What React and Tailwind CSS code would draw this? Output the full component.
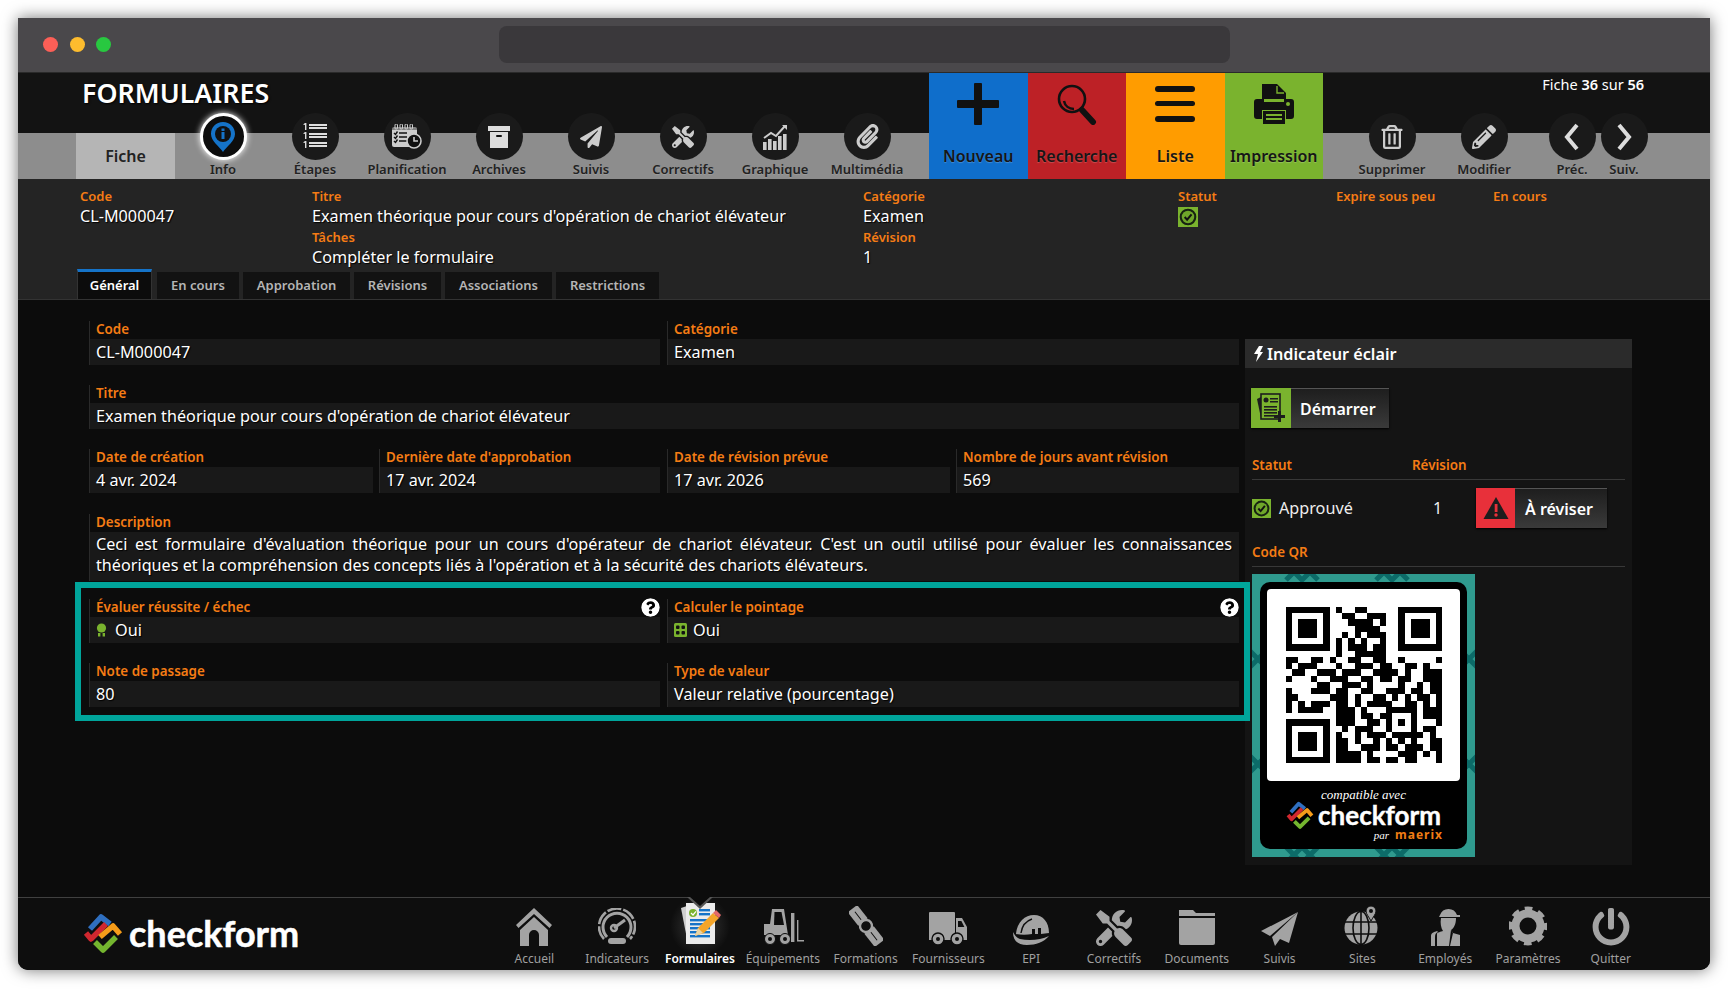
import React from "react";
import { FaTools, FaPaperPlane, FaPencilAlt, FaRegTrashAlt, FaPaperclip, FaQuestionCircle, FaPowerOff } from "react-icons/fa";

const G = "#a3a3a3";

const Pin = () => (
  <svg width="28" height="32" viewBox="0 0 28 32">
    <path d="M14 1C7 1 2 6 2 13c0 7 8 12 12 18 4-6 12-11 12-18C26 6 21 1 14 1z" fill="#1573c8" />
    <circle cx="14" cy="13" r="8" fill="#111" />
    <rect x="12.5" y="11" width="3" height="7" fill="#1573c8" />
    <rect x="12.5" y="7.5" width="3" height="2.5" fill="#1573c8" />
  </svg>
);
const Steps = () => (
  <svg width="26" height="27" viewBox="0 0 26 27" fill="#ddd" className="overflow-visible">
    {[0, 9, 18].map((y) => <path key={y} d={`M1 ${y + 1.5}l2-1.5h1.4v7H3v-5z`} />)}
    {[1, 4, 10, 13, 19, 22].map((y) => <rect key={y} x="7" y={y} width="18" height="2" />)}
  </svg>
);
const Plan = () => (
  <svg width="30" height="26" viewBox="0 0 30 26">
    <rect x="0" y="3" width="25" height="20" rx="2" fill="#ccc" />
    <rect x="0" y="3" width="25" height="3" fill="#111" opacity=".4" />
    {[3, 8, 13, 18].map((x) => <rect key={x} x={x} y="0" width="2.5" height="5" rx="1" fill="none" stroke="#ccc" />)}
    {[9, 13, 17].map((y) => <path key={y} d={`M2 ${y}l1.5 1.5 2-3M7 ${y}h8`} stroke="#111" strokeWidth="1.4" fill="none" />)}
    <circle cx="22" cy="17" r="7" fill="#111" stroke="#ccc" strokeWidth="1.6" />
    <path d="M22 13v4h4" stroke="#ccc" strokeWidth="1.6" fill="none" />
  </svg>
);
const Archive = () => (
  <svg width="24" height="24" viewBox="0 0 24 24" fill="#ddd">
    <rect x="1" y="1" width="22" height="5" />
    <rect x="3" y="7" width="18" height="16" />
    <rect x="9" y="10" width="6" height="2" rx="1" fill="#111" />
  </svg>
);
const Chart = () => (
  <svg width="26" height="28" viewBox="0 0 26 28" fill="#ccc">
    <path d="M2 15l7-5 5 3L23 3" stroke="#ccc" strokeWidth="2" fill="none" />
    <path d="M20 2h5v5z" />
    {[[1, 19], [6, 16], [11, 18], [16, 13], [21, 11]].map(([x, y]) => <rect key={x} x={x} y={y} width="3.6" height={27 - y} />)}
  </svg>
);
const Chev = ({ left }) => (
  <svg width="20" height="30" viewBox="0 0 20 30">
    <path d={left ? "M15 3L5 15l10 12" : "M5 3l10 12L5 27"} stroke="#ddd" strokeWidth="4" fill="none" />
  </svg>
);
const Plus = () => (
  <svg width="42" height="42" viewBox="0 0 42 42" fill="#111">
    <rect x="17" y="0" width="8" height="42" rx="1" />
    <rect x="0" y="17" width="42" height="8" rx="1" />
  </svg>
);
const Loupe = () => (
  <svg width="42" height="42" viewBox="0 0 42 42" fill="none" stroke="#111">
    <circle cx="16" cy="16" r="13" strokeWidth="2.6" />
    <path d="M8 18c1 5 5 8 10 8" strokeWidth="2.5" />
    <path d="M26 27l11 12" strokeWidth="6" strokeLinecap="round" />
  </svg>
);
const Burger = () => (
  <svg width="42" height="36" viewBox="0 0 42 36" fill="#111">
    <rect x="1" y="0" width="40" height="6" rx="3" />
    <rect x="1" y="15" width="40" height="5" rx="2.5" />
    <rect x="1" y="30" width="40" height="6" rx="3" />
  </svg>
);
const Printer = () => (
  <svg width="40" height="40" viewBox="0 0 40 40" fill="#111">
    <path d="M8 0h15l9 9v8H8z" />
    <path d="M23 2v7h7" fill="none" stroke="#7ab32e" strokeWidth="1.4" />
    <path d="M3 15h34a3 3 0 0 1 3 3v14a3 3 0 0 1-3 3h-5V26H8v9H3a3 3 0 0 1-3-3V18a3 3 0 0 1 3-3z" />
    <rect x="10" y="15" width="20" height="3" fill="#7ab32e" />
    <circle cx="34" cy="20" r="2" fill="#7ab32e" />
    <rect x="9" y="27" width="22" height="13" />
    <rect x="12" y="30" width="16" height="2" fill="#7ab32e" />
    <rect x="12" y="34" width="16" height="2" fill="#7ab32e" />
  </svg>
);

const Status = ({ size = 18 }) => (
  <svg width={size} height={size} viewBox="0 0 18 18">
    <rect width="18" height="18" fill="#7ab32e" />
    <circle cx="9" cy="9" r="7.5" fill="#172212" />
    <circle cx="9" cy="9" r="5.6" fill="#6fa62a" />
    <path d="M6 9l2.2 2.4L12.2 6.6" stroke="#111" strokeWidth="1.8" fill="none" />
  </svg>
);
const Ribbon = () => (
  <svg width="11" height="14" viewBox="0 0 11 14" fill="#7ab32e">
    <circle cx="5.5" cy="5" r="4.6" />
    <rect x="2" y="10" width="2.4" height="3.5" />
    <rect x="6.6" y="10" width="2.4" height="3.5" />
  </svg>
);
const Calc = () => (
  <svg width="13" height="14" viewBox="0 0 13 14">
    <rect width="13" height="14" rx="1.5" fill="#7ab32e" />
    <rect x="2" y="2.5" width="3.5" height="3.5" rx="1" fill="#111" />
    <rect x="7.5" y="2.5" width="3.5" height="3.5" rx="1" fill="#111" />
    <rect x="2" y="8" width="3.5" height="3.5" rx="1" fill="#111" />
    <rect x="7.5" y="8" width="3.5" height="3.5" rx="1" fill="#111" />
  </svg>
);
const DocPlus = () => (
  <svg width="30" height="30" viewBox="0 0 30 30">
    <path d="M5 4L1 6l4 19 3-1z" fill="#1d1d1d" />
    <rect x="5" y="1" width="19" height="25" fill="#7ab32e" stroke="#1d1d1d" strokeWidth="1.6" />
    <circle cx="10" cy="7" r="2.5" fill="#1d1d1d" />
    {[6, 9].map((y) => <rect key={y} x="14" y={y - 1} width="8" height="1.5" fill="#1d1d1d" />)}
    {[13, 16, 19, 22].map((y) => <rect key={y} x="8" y={y} width="13" height="1.6" fill="#1d1d1d" />)}
    <path d="M22 18h3v4h4v3h-4v4h-3v-4h-4v-3h4z" fill="#1d1d1d" />
  </svg>
);
const Warn = () => (
  <svg width="26" height="24" viewBox="0 0 26 24">
    <path d="M13 1l12.5 22H.5z" fill="#1d1d1d" />
    <rect x="11.7" y="8" width="2.8" height="8" fill="#e8303a" />
    <circle cx="13" cy="19" r="1.7" fill="#e8303a" />
  </svg>
);
const Bolt = () => (
  <svg width="9" height="16" viewBox="0 0 9 16" fill="#fff">
    <path d="M5 0h4L6 6h3L2 16l2-8H0z" />
  </svg>
);

const Home = () => (
  <svg width="36" height="38" viewBox="0 0 36 38" fill={G}>
    <path d="M18 0l18 17-2.5 3L18 6 2.5 20 0 17z" />
    <path d="M18 9l14 13v16H23V27a5 5 0 0 0-10 0v11H4V22z" />
  </svg>
);
const Gauge = () => (
  <svg width="38" height="38" viewBox="0 0 38 38" fill="none" stroke={G}>
    <path d="M9 29a14 14 0 1 1 20 0" strokeWidth="3" />
    <path d="M6 31A18 18 0 1 1 32 31" strokeWidth="2.6" strokeDasharray="14 2" />
    <path d="M16 20l11-8" strokeWidth="3" />
    <circle cx="16" cy="20" r="3" strokeWidth="2.4" />
    <rect x="10" y="30" width="18" height="6" rx="3" fill={G} stroke="none" />
  </svg>
);
const FormIcon = () => (
  <svg width="46" height="44" viewBox="0 0 46 44">
    <path d="M4 6l6-2 3 38h-2z" fill="#cfcfcf" />
    <rect x="9" y="1" width="29" height="41" fill="#ececec" />
    <circle cx="16" cy="11" r="4" fill="#7ab32e" />
    <path d="M14 11l2 2 3-3.6" stroke="#fff" strokeWidth="1.2" fill="none" />
    {[7, 11].map((y) => <rect key={y} x="22" y={y} width="11" height="2.4" fill="#1573c8" />)}
    {[17, 21, 25, 29, 33].map((y) => <rect key={y} x="13" y={y} width="20" height="2.4" fill="#1573c8" />)}
    <path d="M18 34l3-8 15-15 6 5-15 15z" fill="#f4a52a" />
    <path d="M36 11l3-3 5 5-2 3z" fill="#e46a6a" />
    <path d="M18 34l3-8 5 5z" fill="#e9d4a5" />
  </svg>
);
const Forklift = () => (
  <svg width="42" height="38" viewBox="0 0 42 38" fill={G}>
    <path d="M10 1h12l4 26H2V16h6z" />
    <path d="M12.5 4h7l2.5 13h-10z" fill="#0e0e0e" />
    <circle cx="8" cy="31" r="5.5" stroke="#0e0e0e" strokeWidth="1" />
    <circle cx="8" cy="31" r="2" fill="#0e0e0e" />
    <circle cx="23" cy="31" r="5.5" stroke="#0e0e0e" strokeWidth="1" />
    <circle cx="23" cy="31" r="2" fill="#0e0e0e" />
    <rect x="29" y="5" width="3.4" height="29" />
    <path d="M35 12h1.4v20H42v1.6h-7z" />
  </svg>
);
const Scroll = () => (
  <svg width="34" height="40" viewBox="0 0 34 40" fill={G}>
    <g transform="rotate(-38 17 20)">
      <rect x="11" y="-2" width="12" height="17" />
      <rect x="11" y="25" width="12" height="17" />
      <circle cx="17" cy="20" r="6" fill="none" stroke={G} strokeWidth="2.4" />
      <path d="M17 2v10M17 28v10" stroke="#0e0e0e" />
    </g>
  </svg>
);
const Truck = () => (
  <svg width="38" height="34" viewBox="0 0 38 34" fill={G}>
    <rect x="0" y="0" width="26" height="26" rx="1" />
    <path d="M27 6h6l5 9v11H27z" />
    <path d="M29 9h3.4l3 6H29z" fill="#0e0e0e" />
    <rect x="0" y="25" width="38" height="3" />
    <circle cx="9" cy="27" r="6" stroke="#0e0e0e" strokeWidth="1.4" />
    <circle cx="9" cy="27" r="2" fill="#0e0e0e" />
    <circle cx="28" cy="27" r="6" stroke="#0e0e0e" strokeWidth="1.4" />
    <circle cx="28" cy="27" r="2" fill="#0e0e0e" />
  </svg>
);
const Hat = () => (
  <svg width="38" height="32" viewBox="0 0 38 32" fill={G}>
    <path d="M4 20C5 8 13 1 22 1c9 0 15 7 15 18l-8 1v-6h-3v6h-3v-5h-3v5c-5 1-11 1-16 0z" />
    <path d="M1 18c0 8 4 13 14 13 9 0 17-3 22-9-8 4-20 5-29 3-3-1-5-3-7-7z" />
    <path d="M9 19C10 12 14 7 20 5" stroke="#0e0e0e" strokeWidth="1.4" fill="none" />
  </svg>
);
const Folder = () => (
  <svg width="38" height="36" viewBox="0 0 38 36" fill={G}>
    <path d="M1 0h14l3 3h19v3H1z" />
    <path d="M1 8h36v25a2 2 0 0 1-2 2H3a2 2 0 0 1-2-2z" />
  </svg>
);
const Plane = () => (
  <svg width="38" height="34" viewBox="0 0 38 34" fill={G}>
    <path d="M37 0L0 19l9 5z" />
    <path d="M37 0L11 25l3 9 5-7 9 4z" />
  </svg>
);
const Globe = () => (
  <svg width="36" height="40" viewBox="0 0 36 40" fill={G}>
    <circle cx="17" cy="22" r="16.5" />
    <g stroke="#0e0e0e" strokeWidth="1.6" fill="none">
      <path d="M1 16h32M1 28h32M17 5v34" />
      <ellipse cx="17" cy="22" rx="8" ry="16.5" />
    </g>
    <path d="M27 0a5 5 0 0 1 5 5c0 3-3 6-5 10-2-4-5-7-5-10a5 5 0 0 1 5-5z" stroke="#0e0e0e" />
    <circle cx="27" cy="5" r="2" fill="#0e0e0e" />
  </svg>
);
const Worker = () => (
  <svg width="32" height="40" viewBox="0 0 32 40" fill={G}>
    <path d="M11 9a9 9 0 0 1 17 0h3v2H10z" />
    <path d="M12 12h15c0 6-2 10-5 12l2 3 7 2v11H8V28c0-2 4-2 6-3-2-3-3-8-2-13z" />
    <path d="M2 40V30c0-3 3-4 6-5l1 1c-2 1-3 2-3 5v9z" />
    <path d="M22 24l2 3-3 13h-1z" fill="#0e0e0e" />
  </svg>
);
const Gear = () => (
  <svg width="38" height="40" viewBox="0 0 38 40" fill="none" stroke={G}>
    <circle cx="19" cy="20" r="12.5" strokeWidth="8" />
    <circle cx="19" cy="20" r="17" strokeWidth="5" strokeDasharray="7.5 5.85" strokeDashoffset="3.7" />
  </svg>
);

const LogoMark = ({ size = 40 }) => (
  <svg width={size} height={size} viewBox="0 0 40 40" fill="none" strokeWidth="5.5" strokeLinejoin="round">
    <path d="M7 16L18 4l9 7" stroke="#2f6fc0" />
    <path d="M3 20l5 6 15-15" stroke="#d0272f" />
    <path d="M17 24l13-11 7 8" stroke="#f59c1a" />
    <path d="M12 29l8 8 13-13" stroke="#74b52f" />
  </svg>
);

const QR = [
  "#######.#..##.....#######",
  "#.....#..##..###..#.....#",
  "#.###.#...####.#..#.###.#",
  "#.###.#....####...#.###.#",
  "#.###.#..#.#.###..#.###.#",
  "#.....#.#.#.#..#..#.....#",
  "#######.#.###.##..#######",
  "........#..#####.........",
  "##..##.#..##..##..#.....#",
  "#.###...#..###.##..##.#..",
  ".##..###.###..####.#..###",
  "#...#..###..##.##.##..###",
  ".....##..###.#....#..#.##",
  "#...###.##..##..###.##.##",
  "##.....###.#..##.#.#.##.#",
  "#.#.###.##.#.####..##.#.#",
  "#.####..###.#...#####.###",
  "........###.##.##...#.###",
  "#######.###..##.#.#.#...#",
  "#.....#..#.###..#...#.##.",
  "#.###.#.#..#.###.#####.#.",
  "#.###.#.##.#..#.#.#.#..##",
  "#.###.#.##..###.##.###.##",
  "#.....#.####.#....###.#.#",
  "#######.####.##.##.##...#",
];

const QrSvg = () => (
  <svg width="156" height="156" viewBox="0 0 25 25" shapeRendering="crispEdges">
    {QR.map((row, y) => row.split("").map((c, x) => (c === "#" ? <rect key={x + "-" + y} x={x} y={y} width="1" height="1" fill="#000" /> : null)))}
  </svg>
);

const ToolItem = ({ icon, label, w = "w-[92px]", active }) => (
  <div className={`${w} flex flex-col items-center`}>
    <div className={`w-[47px] h-[47px] rounded-full flex items-center justify-center ${active ? "border-[3px] border-white bg-[#0d0d0d] shadow-[0_0_6px_#fff]" : "bg-[#1a1a1a]"}`}>{icon}</div>
    <div className="h-[19px] leading-[19px] text-[13px] font-semibold text-[#222] whitespace-nowrap [text-shadow:0_1px_1px_rgba(255,255,255,0.15)]">{label}</div>
  </div>
);

const BigBtn = ({ bg, icon, label }) => (
  <div className={`w-[98.5px] h-[106px] ${bg} flex flex-col items-center`}>
    <div className="h-[66px] pt-[10px] flex items-start justify-center">{icon}</div>
    <div className="text-[16px] leading-[22px] mt-[6px] font-semibold text-[#161616] [text-shadow:0_1px_1px_rgba(255,255,255,0.2)] whitespace-nowrap">{label}</div>
  </div>
);

const OrangeLabel = ({ children, small }) => (
  <div className={`${small ? "text-[13px]" : "text-[13.4px]"} leading-[17px] h-[18px] font-semibold text-[#f57c14] whitespace-nowrap`}>{children}</div>
);

const InfoCell = ({ label, value, w }) => (
  <div className={w}>
    <div className="pt-[1px]"><OrangeLabel small>{label}</OrangeLabel></div>
    {value && <div className="text-[16.2px] leading-[21px] pb-[1px] text-white whitespace-nowrap [text-shadow:1px_1px_1px_#000]">{value}</div>}
  </div>
);

const Field = ({ label, children, w, help }) => (
  <div className={`${w} border-l border-[#2a2a2a] relative`}>
    <div className="h-[18px] pl-[6px]"><OrangeLabel>{label}</OrangeLabel></div>
    <div className="min-h-[26px] bg-[#191919] pl-[6px] pr-[6px] text-[16.2px] leading-[26px] text-white flex items-center gap-[6px] [text-shadow:1px_1px_1px_#000]">{children}</div>
    {help && <FaQuestionCircle className="absolute right-[0px] top-[-1px] bg-black rounded-full" color="#fff" size={19} />}
  </div>
);

const Tab = ({ label, w, active }) => (
  <div className={`${w} flex items-center justify-center text-[13px] font-semibold whitespace-nowrap ${active ? "h-[30px] bg-[#0c0c0c] text-white border-t-[3px] border-[#1573c8] border-r border-r-[#333] border-l border-l-[#333]" : "h-[27px] pt-[1px] bg-[#121212] text-[#b5b5b5]"}`}>{label}</div>
);

const NavItem = ({ icon, label, active }) => (
  <div className={`w-[82.8px] pt-[4px] flex flex-col items-center ${active ? "bg-[radial-gradient(circle_at_50%_28px,#3a3a3a_0,transparent_30px)]" : ""}`}>
    <div className="h-[45px] flex items-end justify-center pb-[1px]">{icon}</div>
    <div className={`text-[12px] leading-[18px] mt-[3px] whitespace-nowrap ${active ? "text-white font-semibold" : "text-[#a0a0a0]"}`}>{label}</div>
  </div>
);

const Chevrons = () => (
  <svg width="223" height="283" viewBox="0 0 223 283" className="absolute left-0 top-0">
    <g fill="none" stroke="#0c6b68" strokeWidth="5">
      {[[50, -2], [140, -2], [50, 281], [140, 281], [-2, 85], [-2, 190], [225, 85], [225, 190]].map(([x, y], i) => (
        <path key={i} d={`M${x - 16} ${y - 8}l16 16 16-16M${x - 16} ${y + 8}l16-16 16 16`} />
      ))}
    </g>
  </svg>
);

export default function App() {
  return (
    <div className="w-[1728px] h-[989px] bg-white pt-[18px] pl-[18px] font-['Noto_Sans',sans-serif] overflow-hidden">
      <div className="w-[1692px] h-[952px] flex flex-col rounded-b-[10px] overflow-hidden shadow-[0_0_16px_rgba(0,0,0,0.55)] bg-[#0c0c0c]">
        {/* title bar */}
        <div className="h-[55px] bg-[#4a484b] border-b border-[#2a2a2a] flex items-center pl-[25px] pb-[2px] shrink-0">
          <div className="w-[15px] h-[15px] rounded-full bg-[#fc5f57]" />
          <div className="w-[15px] h-[15px] rounded-full bg-[#fdbc2e] ml-[11.5px]" />
          <div className="w-[15px] h-[15px] rounded-full bg-[#28c840] ml-[11.5px]" />
          <div className="w-[731px] h-[37px] rounded-[8px] bg-[#3a383b] ml-[388px]" />
        </div>

        {/* header */}
        <div className="h-[106px] flex shrink-0 bg-[linear-gradient(to_bottom,#131313_60px,#8d8d8d_60px)]">
          <div className="w-[911px] flex flex-col">
            <div className="h-[40px] pl-[64px] pt-[2px] text-[26.8px] leading-[36px] font-semibold text-white [text-shadow:1px_1px_2px_#000]">FORMULAIRES</div>
            <div className="h-[66px] flex items-end pl-[58px]">
              <div className="w-[99px] h-[46px] bg-[#b5b5b5] flex items-center justify-center text-[16px] font-semibold text-[#222] mr-[2px]">Fiche</div>
              <ToolItem active icon={<Pin />} label="Info" />
              <ToolItem icon={<Steps />} label="Étapes" />
              <ToolItem icon={<Plan />} label="Planification" />
              <ToolItem icon={<Archive />} label="Archives" />
              <ToolItem icon={<FaPaperPlane size={22} color="#ccc" />} label="Suivis" />
              <ToolItem icon={<FaTools size={22} color="#ccc" />} label="Correctifs" />
              <ToolItem icon={<Chart />} label="Graphique" />
              <ToolItem icon={<FaPaperclip size={25} color="#ccc" />} label="Multimédia" />
            </div>
          </div>
          <BigBtn bg="bg-[#0f6ecb]" icon={<Plus />} label="Nouveau" />
          <BigBtn bg="bg-[#bd2126]" icon={<Loupe />} label="Recherche" />
          <BigBtn bg="bg-[#ff9c00]" icon={<div className="pt-[3px]"><Burger /></div>} label="Liste" />
          <BigBtn bg="bg-[#7ab32e]" icon={<div className="pt-[1px]"><Printer /></div>} label="Impression" />
          <div className="flex-1 flex flex-col">
            <div className="h-[40px] flex justify-end pr-[66px] text-[14.5px] leading-[22px] font-semibold text-white whitespace-nowrap">
              <span><span className="font-normal">Fiche </span>36<span className="font-normal"> sur </span>56</span>
            </div>
            <div className="h-[66px] flex items-end pl-[23px]">
              <ToolItem icon={<FaRegTrashAlt size={24} color="#ccc" />} label="Supprimer" />
              <ToolItem icon={<FaPencilAlt size={24} color="#ccc" />} label="Modifier" />
              <div className="w-[16px]" />
              <ToolItem w="w-[52px]" icon={<Chev left />} label="Préc." />
              <ToolItem w="w-[52px]" icon={<Chev />} label="Suiv." />
            </div>
          </div>
        </div>

        {/* info section */}
        <div className="h-[121px] bg-[#242424] border-b border-[#333] flex flex-col shrink-0">
          <div className="h-[91px] pt-[8px] pl-[62px] flex">
            <InfoCell w="w-[232px]" label="Code" value="CL-M000047" />
            <div className="w-[551px] flex flex-col">
              <InfoCell label="Titre" value="Examen théorique pour cours d'opération de chariot élévateur" />
              <InfoCell label="Tâches" value="Compléter le formulaire" />
            </div>
            <div className="w-[315px] flex flex-col">
              <InfoCell label="Catégorie" value="Examen" />
              <InfoCell label="Révision" value="1" />
            </div>
            <div className="w-[158px] pt-[1px]">
              <OrangeLabel small>Statut</OrangeLabel>
              <div className="pt-[1px]"><Status size={20} /></div>
            </div>
            <InfoCell w="w-[157px]" label="Expire sous peu" />
            <InfoCell label="En cours" />
          </div>
          <div className="h-[30px] pl-[59px] flex items-end gap-[4px]">
            <Tab active w="w-[75px] mr-[1px]" label="Général" />
            <Tab w="w-[82px]" label="En cours" />
            <Tab w="w-[107px]" label="Approbation" />
            <Tab w="w-[87px]" label="Révisions" />
            <Tab w="w-[107px]" label="Associations" />
            <Tab w="w-[103px]" label="Restrictions" />
          </div>
        </div>

        {/* main */}
        <div className="flex-1 flex min-h-0 bg-[#0c0c0c]">
          <div className="w-[1175px] ml-[57px] pt-[21px] flex flex-col relative z-10 shrink-0">
            <div className="pl-[14px] flex flex-col">
              <div className="flex gap-[7px]">
                <Field w="w-[571px]" label="Code">CL-M000047</Field>
                <Field w="w-[572px]" label="Catégorie">Examen</Field>
              </div>
              <div className="mt-[20px]"><Field w="w-[1150px]" label="Titre">Examen théorique pour cours d'opération de chariot élévateur</Field></div>
              <div className="mt-[20px] flex gap-[6px]">
                <Field w="w-[284px]" label="Date de création">4 avr. 2024</Field>
                <Field w="w-[281px] mr-[1px]" label="Dernière date d'approbation">17 avr. 2024</Field>
                <Field w="w-[283px]" label="Date de révision prévue">17 avr. 2026</Field>
                <Field w="w-[283px]" label="Nombre de jours avant révision">569</Field>
              </div>
              <div className="mt-[21px]">
                <Field w="w-[1150px]" label="Description">
                  <div className="text-justify leading-[21px] h-[49px] pt-[2px] w-[1136px]">Ceci est formulaire d'évaluation théorique pour un cours d'opérateur de chariot élévateur. C'est un outil utilisé pour évaluer les connaissances théoriques et la compréhension des concepts liés à l'opération et à la sécurité des chariots élévateurs.</div>
                </Field>
              </div>
            </div>
            <div className="mt-[1px] border-[6px] border-[#00a59b] pt-[11px] pb-[8px] pl-[8px] bg-[#0c0c0c]">
              <div className="flex gap-[7px]">
                <Field help w="w-[571px]" label="Évaluer réussite / échec"><Ribbon /><span className="ml-[2px]">Oui</span></Field>
                <Field help w="w-[572px]" label="Calculer le pointage"><Calc /><span>Oui</span></Field>
              </div>
              <div className="flex gap-[7px] mt-[20px]">
                <Field w="w-[571px]" label="Note de passage">80</Field>
                <Field w="w-[572px]" label="Type de valeur">Valeur relative (pourcentage)</Field>
              </div>
            </div>
          </div>

          {/* right panel */}
          <div className="w-[387px] h-[526px] ml-[-5px] mt-[39px] bg-[#141414] shrink-0">
            <div className="h-[29px] pt-[1px] bg-[#2b2b2b] flex items-center pl-[9px] gap-[4px] text-[16.2px] font-semibold text-white">
              <Bolt /><span>Indicateur éclair</span>
            </div>
            <div className="mt-[20px] ml-[6px] w-[138px] h-[40px] flex shadow-[0_1px_2px_#000]">
              <div className="w-[40px] bg-[#7ab32e] flex items-center justify-center"><DocPlus /></div>
              <div className="flex-1 border-t border-[#555] bg-[linear-gradient(to_bottom,#1e1e1e,#3a3a3a)] flex items-center pl-[9px] text-[16px] font-semibold text-white">Démarrer</div>
            </div>
            <div className="mt-[29px] ml-[7px] mr-[7px] h-[23px] border-b border-[#383838] flex">
              <div className="w-[160px]"><OrangeLabel>Statut</OrangeLabel></div>
              <OrangeLabel>Révision</OrangeLabel>
            </div>
            <div className="mt-[8px] ml-[7px] flex items-center h-[40px]">
              <Status size={19} />
              <div className="ml-[8px] w-[154px] text-[16.2px] text-[#eee]">Approuvé</div>
              <div className="w-[43px] text-[16.2px] text-[#eee]">1</div>
              <div className="w-[131px] h-[40px] flex shadow-[0_1px_2px_#000]">
                <div className="w-[39px] bg-[#e8303a] flex items-center justify-center"><Warn /></div>
                <div className="flex-1 border-t border-[#555] bg-[linear-gradient(to_bottom,#1e1e1e,#3a3a3a)] flex items-center pl-[10px] text-[16px] font-semibold text-white">À réviser</div>
              </div>
            </div>
            <div className="mt-[16px] ml-[7px] mr-[7px] h-[23px] border-b border-[#383838]"><OrangeLabel>Code QR</OrangeLabel></div>
            <div className="relative mt-[7px] ml-[7px] w-[223px] h-[283px] bg-[#2f9a8e] pt-[8px] px-[8px]">
              <Chevrons />
              <div className="relative w-[207px] h-[267px] bg-black rounded-[10px] p-[7px]">
                <div className="w-[193px] h-[192px] bg-white rounded-[4px] flex items-center justify-center"><QrSvg /></div>
                <div className="flex flex-col items-center text-white">
                  <div className="text-[13px] leading-[14px] mt-[7px] font-['Liberation_Serif',serif] italic">compatible avec</div>
                  <div className="flex items-center gap-[4px] -mt-[1px]">
                    <LogoMark size={28} />
                    <span className="text-[26px] leading-[24px] font-bold font-['Lato',sans-serif] [-webkit-text-stroke:0.4px_white]">checkform</span>
                  </div>
                  <div className="w-full flex justify-end items-center gap-[6px] pr-[17px] leading-[12px]">
                    <span className="text-[11px] italic font-['Liberation_Serif',serif]">par</span>
                    <span className="text-[12px] font-bold tracking-[1px] text-[#f07d14]">maerix</span>
                  </div>
                </div>
              </div>
            </div>
          </div>
        </div>

        {/* bottom nav */}
        <div className="h-[73px] border-t border-[#404040] bg-[#0e0e0e] flex relative shrink-0">
          <svg width="26" height="12" viewBox="0 0 26 12" className="absolute left-[669px] top-[-1px]">
            <path d="M0 0h26L13 12z" fill="#555" />
            <path d="M3 0h20L13 9z" fill="#0c0c0c" />
          </svg>
          <div className="w-[475px] pl-[65px] flex items-center gap-[6px] pb-[2px]">
            <LogoMark size={40} />
            <span className="text-[36px] leading-[40px] font-bold text-white font-['Lato',sans-serif] [-webkit-text-stroke:0.5px_white]">checkform</span>
          </div>
          <NavItem icon={<Home />} label="Accueil" />
          <NavItem icon={<Gauge />} label="Indicateurs" />
          <NavItem active icon={<FormIcon />} label="Formulaires" />
          <NavItem icon={<Forklift />} label="Équipements" />
          <NavItem icon={<Scroll />} label="Formations" />
          <NavItem icon={<Truck />} label="Fournisseurs" />
          <NavItem icon={<Hat />} label="EPI" />
          <NavItem icon={<FaTools size={36} color={G} />} label="Correctifs" />
          <NavItem icon={<Folder />} label="Documents" />
          <NavItem icon={<Plane />} label="Suivis" />
          <NavItem icon={<Globe />} label="Sites" />
          <NavItem icon={<Worker />} label="Employés" />
          <NavItem icon={<Gear />} label="Paramètres" />
          <NavItem icon={<FaPowerOff size={38} color={G} />} label="Quitter" />
        </div>
      </div>
    </div>
  );
}
